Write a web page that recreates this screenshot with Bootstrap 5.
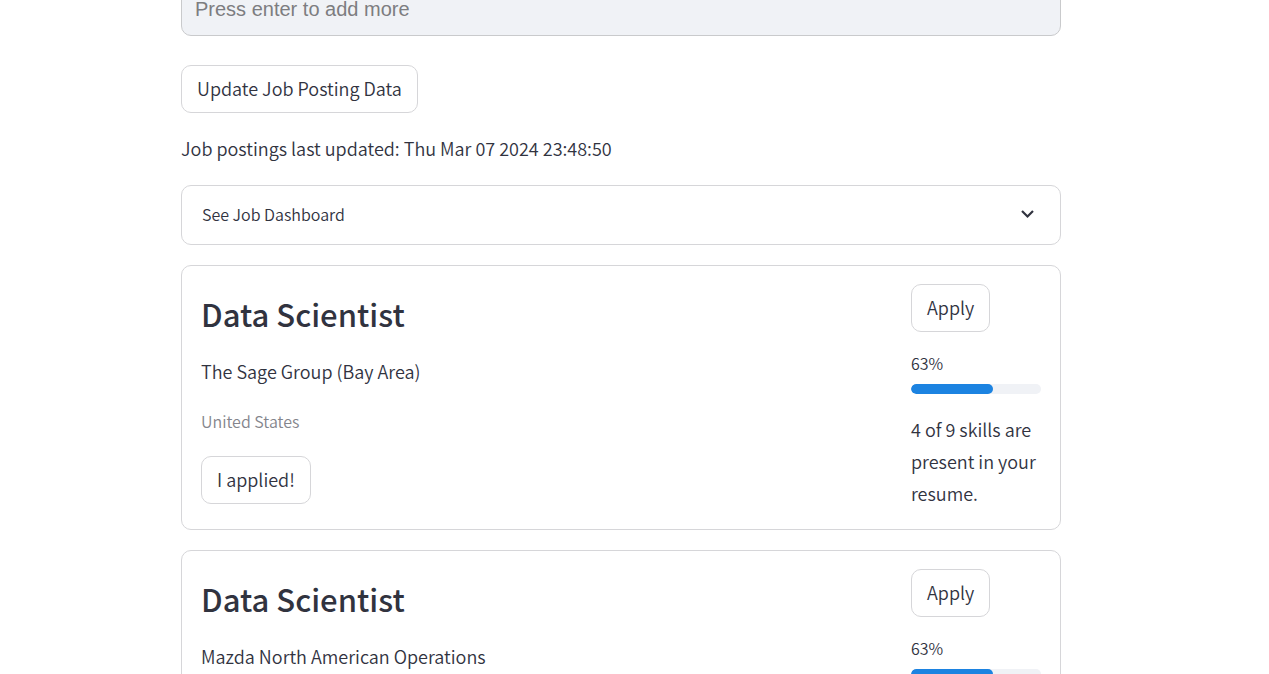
<!DOCTYPE html>
<html lang="en">
<head>
<meta charset="utf-8">
<meta name="viewport" content="width=device-width, initial-scale=1">
<title>Job Postings</title>
<link href="https://cdn.jsdelivr.net/npm/bootstrap@5.3.0/dist/css/bootstrap.min.css" rel="stylesheet">
<style>
  body {
    font-family: "Noto Sans CJK SC", "Noto Sans", sans-serif;
    font-size: 18px;
    font-weight: 350;
    line-height: 32px;
    color: #31333f;
  }
  .page-wrap { padding-right: 27px; }
  .page-column { max-width: 880px; }
  .skill-input {
    height: 56px;
    margin-top: -20px;
    margin-bottom: 29px;
    padding: 2px 13px 0;
    border: 1px solid #c9cacc;
    border-radius: 10px;
    background: #f0f2f6;
    font: 20px "Liberation Sans", Arial, sans-serif;
  }
  .skill-input::placeholder { color: #7d7d80; }
  .btn-plain {
    height: 48px;
    padding: 0 15px 2px;
    font-size: 18px;
    font-weight: 350;
    line-height: 44px;
    color: #31333f;
    background: #fff;
    border: 1px solid #d6d6d9;
    border-radius: 10px;
  }
  .btn-plain:hover { color: #1c83e1; border-color: #1c83e1; }
  .panel { border: 1px solid #d6d6d9; border-radius: 10px; margin-bottom: 20px; }
  .updated { margin: 19px 0 21px; }
  .expander {
    height: 58px;
    padding: 0 19px 2px 20px;
    border: 0;
    background: none;
    color: inherit;
    font-weight: 350;
  }
  .fine { font-size: 16px; line-height: 24px; }
  .job { padding: 18px 19px 20px; }
  .job-title { margin: 9px 0 20px; font-size: 31px; line-height: 42px; font-weight: 500; }
  .place { margin: 22px 0 23px; color: #84858c; }
  .match { width: 130px; }
  .apply { margin-bottom: 19px; }
  .match .progress { height: 10px; border-radius: 5px; margin: 9px 0 19px; background: #f0f2f6; }
  .match .progress-bar { border-radius: 5px; background: #1c83e1; }
</style>
</head>
<body>
<div class="page-wrap">
  <main class="page-column mx-auto">
    <input type="text" class="skill-input d-block w-100" aria-label="Skills" placeholder="Press enter to add more">
    <button type="button" class="btn btn-plain">Update Job Posting Data</button>
    <p class="updated">Job postings last updated: Thu Mar 07 2024 23:48:50</p>

    <section class="panel">
      <button type="button" class="expander fine w-100 d-flex align-items-center justify-content-between" aria-expanded="false">
        <span>See Job Dashboard</span>
        <svg width="26" height="20" viewBox="0 0 26 20" fill="none" stroke="#31333f" stroke-width="2.200" aria-hidden="true"><path d="M7 7l5.500 5.500L18 7"/></svg>
      </button>
    </section>

    <article class="panel job d-flex">
      <div class="flex-grow-1">
        <h2 class="job-title">Data Scientist</h2>
        <p class="m-0">The Sage Group (Bay Area)</p>
        <p class="place fine">United States</p>
        <button type="button" class="btn btn-plain">I applied!</button>
      </div>
      <div class="match flex-shrink-0">
        <button type="button" class="btn btn-plain apply d-block">Apply</button>
        <div class="fine">63%</div>
        <div class="progress" role="progressbar" aria-label="Skill match" aria-valuenow="63" aria-valuemin="0" aria-valuemax="100"><div class="progress-bar" style="width:63%"></div></div>
        <p class="m-0">4 of 9 skills are present in your resume.</p>
      </div>
    </article>

    <article class="panel job d-flex">
      <div class="flex-grow-1">
        <h2 class="job-title">Data Scientist</h2>
        <p class="m-0">Mazda North American Operations</p>
        <p class="place fine">United States</p>
        <button type="button" class="btn btn-plain">I applied!</button>
      </div>
      <div class="match flex-shrink-0">
        <button type="button" class="btn btn-plain apply d-block">Apply</button>
        <div class="fine">63%</div>
        <div class="progress" role="progressbar" aria-label="Skill match" aria-valuenow="63" aria-valuemin="0" aria-valuemax="100"><div class="progress-bar" style="width:63%"></div></div>
        <p class="m-0">4 of 9 skills are present in your resume.</p>
      </div>
    </article>
  </main>
</div>
<script src="https://cdn.jsdelivr.net/npm/bootstrap@5.3.0/dist/js/bootstrap.bundle.min.js"></script>
</body>
</html>
